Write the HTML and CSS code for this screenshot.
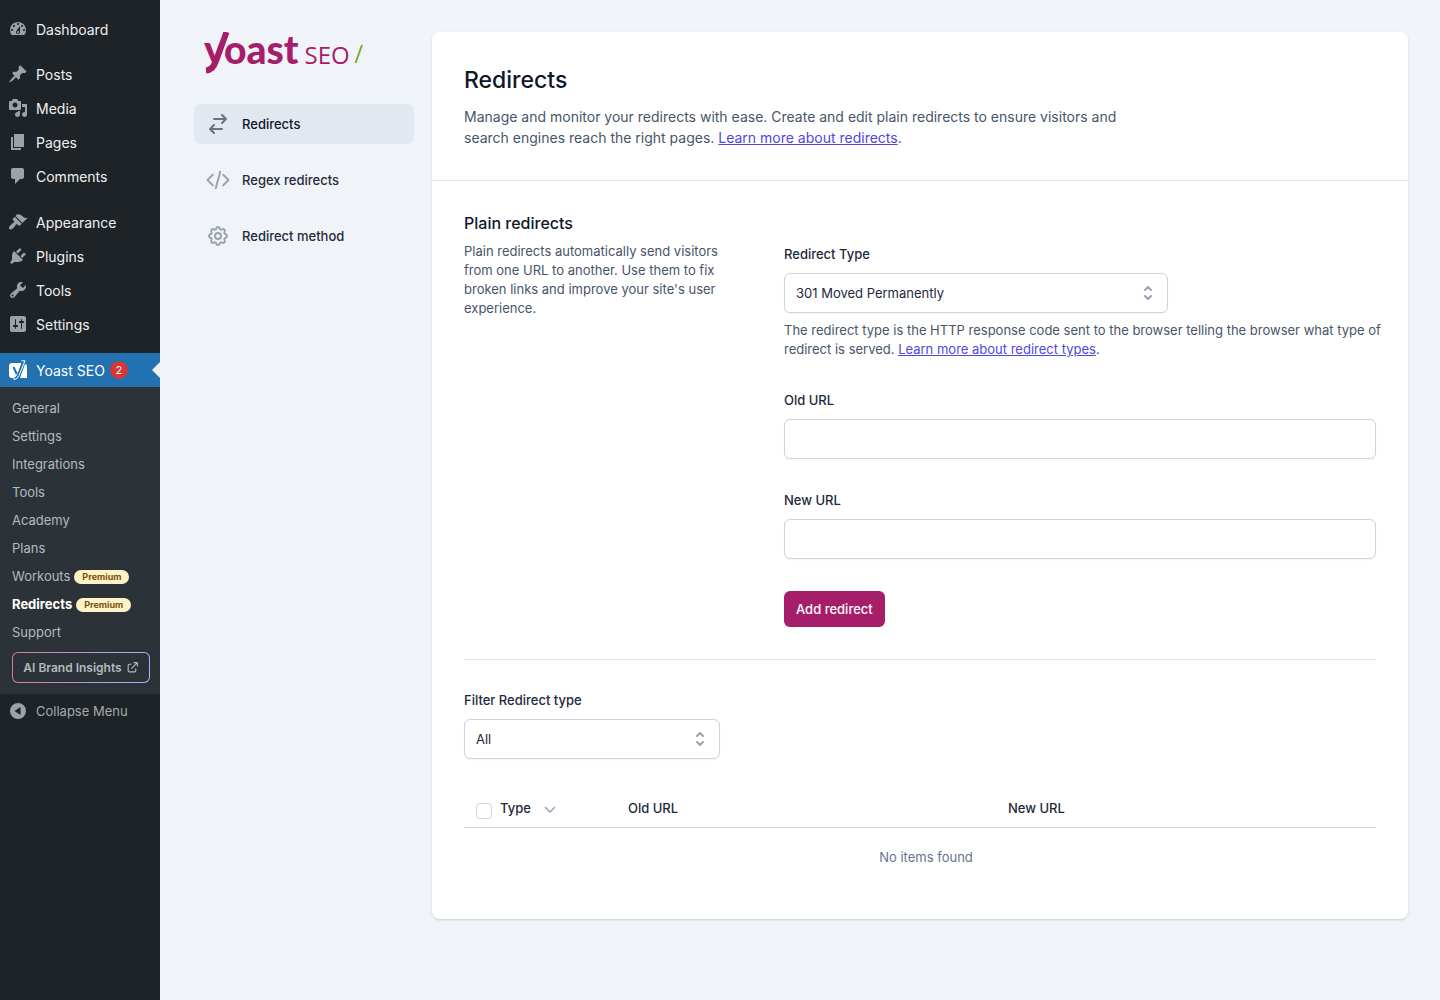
FILE: index.html
```
<!DOCTYPE html>
<html lang="en">
<head>
  <meta charset="UTF-8">
  <meta name="viewport" content="width=device-width, initial-scale=1">
  <title>Redirects - Yoast SEO</title>
  <link rel="stylesheet" href="styles.css">
</head>
<body>
<div class="layout">
  <!-- admin menu -->
  <nav class="admin-menu" aria-label="Main menu">
    <ul class="menu-group">
      <li><a href="#" class="menu-item">
        <svg class="menu-icon" viewBox="0 0 20 20"><path d="M3.76 16h12.48c1.1-1.37 1.76-3.11 1.76-5 0-4.42-3.58-8-8-8s-8 3.58-8 8c0 1.89.66 3.63 1.76 5zM10 4c.55 0 1 .45 1 1s-.45 1-1 1-1-.45-1-1 .45-1 1-1zM6 6c.55 0 1 .45 1 1s-.45 1-1 1-1-.45-1-1 .45-1 1-1zm8 0c.55 0 1 .45 1 1s-.45 1-1 1-1-.45-1-1 .45-1 1-1zm-5.37 5.55L12 7v6c0 1.1-.9 2-2 2s-2-.9-2-2c0-.57.24-1.08.63-1.45zM4 10c.55 0 1 .45 1 1s-.45 1-1 1-1-.45-1-1 .45-1 1-1zm12 0c.55 0 1 .45 1 1s-.45 1-1 1-1-.45-1-1 .45-1 1-1zm-5 3c0-.55-.45-1-1-1s-1 .45-1 1 .45 1 1 1 1-.45 1-1z"/></svg>
        Dashboard</a></li>
    </ul>
    <ul class="menu-group">
      <li><a href="#" class="menu-item">
        <svg class="menu-icon" viewBox="0 0 20 20"><path d="M10.44 3.02l1.82-1.82 6.36 6.35-1.83 1.82c-1.05-.68-2.48-.57-3.41.36l-.75.75c-.92.93-1.04 2.35-.35 3.41l-1.83 1.82-2.41-2.41-2.8 2.79c-.42.42-3.38 2.71-3.8 2.29s1.86-3.39 2.28-3.81l2.79-2.79L4.1 9.36l1.83-1.82c1.05.69 2.48.57 3.4-.36l.75-.75c.93-.92 1.05-2.35.36-3.41z"/></svg>
        Posts</a></li>
      <li><a href="#" class="menu-item">
        <svg class="menu-icon" viewBox="0 0 20 20"><path d="M13 11V4c0-.55-.45-1-1-1h-1.67L9 1H5L3.67 3H2c-.55 0-1 .45-1 1v7c0 .55.45 1 1 1h10c.55 0 1-.45 1-1zM7 4.5c1.38 0 2.5 1.12 2.5 2.5S8.38 9.5 7 9.5 4.5 8.38 4.5 7 5.62 4.5 7 4.5zM14 6h5v10.5c0 1.38-1.12 2.5-2.5 2.5S14 17.88 14 16.5s1.12-2.5 2.5-2.5c.17 0 .34.02.5.05V9h-3V6zm-4 8.05V13h2v3.5c0 1.38-1.12 2.5-2.5 2.5S7 17.88 7 16.5 8.12 14 9.5 14c.17 0 .34.02.5.05z"/></svg>
        Media</a></li>
      <li><a href="#" class="menu-item">
        <svg class="menu-icon" viewBox="0 0 20 20"><path d="M6 15V2h10v13H6zm-1 1h8v2H3V5h2v11z"/></svg>
        Pages</a></li>
      <li><a href="#" class="menu-item">
        <svg class="menu-icon" viewBox="0 0 20 20"><path d="M5 2h9c1.1 0 2 .9 2 2v7c0 1.1-.9 2-2 2h-2l-5 5v-5H5c-1.1 0-2-.9-2-2V4c0-1.1.9-2 2-2z"/></svg>
        Comments</a></li>
    </ul>
    <ul class="menu-group">
      <li><a href="#" class="menu-item">
        <svg class="menu-icon" viewBox="0 0 20 20"><path d="M14.48 11.06L7.41 3.99l1.5-1.5c.5-.56 2.3-.47 3.51.32 1.21.8 1.43 1.28 2.91 2.1 1.18.64 2.45 1.26 4.45.85zm-.71.71L6.7 4.7 4.93 6.47c-.39.39-.39 1.02 0 1.41l1.06 1.06c.39.39.39 1.03 0 1.42-.6.6-1.43 1.11-2.21 1.69-.35.26-.7.53-1.01.84C1.43 14.23.4 16.08 1.4 17.07c.99 1 2.84-.03 4.18-1.36.31-.31.58-.66.85-1.02.57-.78 1.08-1.61 1.69-2.21.39-.39 1.02-.39 1.41 0l1.06 1.06c.39.39 1.02.39 1.41 0z"/></svg>
        Appearance</a></li>
      <li><a href="#" class="menu-item">
        <svg class="menu-icon" viewBox="0 0 20 20"><path d="M13.11 4.36L9.87 7.6 8 5.73l3.24-3.24c.35-.34 1.05-.2 1.56.32.52.51.66 1.21.31 1.55zm-8 1.77l.91-1.12 9.01 9.01-1.19.84c-.71.71-2.63 1.16-3.82 1.16H6.14L4.9 17.26c-.59.59-1.54.59-2.12 0-.59-.58-.59-1.53 0-2.12l1.24-1.24v-3.88c0-1.13.4-3.19 1.09-3.89zm7.26 3.97l3.24-3.24c.34-.35 1.04-.21 1.55.31.52.51.66 1.21.31 1.55l-3.24 3.25z"/></svg>
        Plugins</a></li>
      <li><a href="#" class="menu-item">
        <svg class="menu-icon" viewBox="0 0 20 20"><path d="M16.68 9.77c-1.34 1.34-3.3 1.67-4.95.99l-5.41 6.52c-.99.99-2.59.99-3.58 0s-.99-2.59 0-3.57l6.52-5.42c-.68-1.65-.35-3.61.99-4.95 1.28-1.28 3.12-1.62 4.72-1.06l-2.89 2.89 2.82 2.82 2.86-2.87c.53 1.58.18 3.39-1.08 4.65zM3.81 16.21c.4.39 1.04.39 1.43 0 .4-.4.4-1.04 0-1.43-.39-.4-1.03-.4-1.43 0-.39.39-.39 1.03 0 1.43z"/></svg>
        Tools</a></li>
      <li><a href="#" class="menu-item">
        <svg class="menu-icon" viewBox="0 0 20 20"><path d="M18 16V4c0-1.1-.9-2-2-2H4c-1.1 0-2 .9-2 2v12c0 1.1.9 2 2 2h12c1.1 0 2-.9 2-2zM8 11h1c.55 0 1 .45 1 1s-.45 1-1 1H8v1.5c0 .28-.22.5-.5.5s-.5-.22-.5-.5V13H6c-.55 0-1-.45-1-1s.45-1 1-1h1V5.5c0-.28.22-.5.5-.5s.5.22.5.5V11zm5-2h-1c-.55 0-1-.45-1-1s.45-1 1-1h1V5.5c0-.28.22-.5.5-.5s.5.22.5.5V7h1c.55 0 1 .45 1 1s-.45 1-1 1h-1v5.5c0 .28-.22.5-.5.5s-.5-.22-.5-.5V9z"/></svg>
        Settings</a></li>
    </ul>
    <ul class="menu-group">
      <li><a href="#" class="menu-item current">
        <svg class="menu-icon" viewBox="0 0 20 20">
          <path d="M4 3h9.500l-5 15H4c-2 0-3-1-3-3V6c0-2 1-3 3-3zM17 4c1.200.300 2 1.200 2 2.500V18h-7z"/>
          <path class="icon-mark" d="M5.500 7l3.200 7M15.500 1l-5.500 14q-1 3-4 3.500"/>
          <path class="icon-edge" d="M13.500.800h3.500L11 15.500q-1.500 4-5 4v-1.800"/>
        </svg>
        Yoast SEO <span class="count">2</span></a></li>
    </ul>
    <ul class="submenu">
      <li><a href="#">General</a></li>
      <li><a href="#">Settings</a></li>
      <li><a href="#">Integrations</a></li>
      <li><a href="#">Tools</a></li>
      <li><a href="#">Academy</a></li>
      <li><a href="#">Plans</a></li>
      <li><a href="#">Workouts <span class="premium">Premium</span></a></li>
      <li><a href="#" class="active">Redirects <span class="premium">Premium</span></a></li>
      <li><a href="#">Support</a></li>
      <li class="insights"><a href="#">AI Brand Insights
        <svg viewBox="0 0 24 24"><path d="M10 6H6a2 2 0 00-2 2v10a2 2 0 002 2h10a2 2 0 002-2v-4M14 3h7m0 0v7m0-7L10 14"/></svg></a></li>
    </ul>
    <button type="button" class="collapse">
      <svg class="menu-icon" viewBox="0 0 20 20"><path fill-rule="evenodd" d="M10 2a8 8 0 100 16 8 8 0 000-16zm2.500 4v8L6.500 10z"/></svg>
      Collapse Menu</button>
  </nav>

  <div class="content">
    <!-- plugin navigation -->
    <aside class="side-nav">
      <a href="#" class="logo" aria-label="Yoast SEO">
        <svg class="logo-stroke" viewBox="0 0 40 44"><path d="M24.500 0L14 29Q11 38 4 38.500"/></svg>
        <span class="logo-name">yoast</span>
        <span class="logo-seo">SEO</span>
        <svg class="logo-slash" viewBox="0 0 10 20"><path d="M1.500 19L8 1"/></svg>
      </a>
      <a href="#" class="side-link selected">
        <svg viewBox="0 0 24 24"><path d="M8 7h12m0 0l-4-4m4 4l-4 4m0 6H4m0 0l4 4m-4-4l4-4"/></svg>
        Redirects</a>
      <a href="#" class="side-link">
        <svg viewBox="0 0 24 24"><path d="M17.250 6.750L22.500 12l-5.250 5.250M6.750 17.250L1.500 12l5.250-5.250M14.250 3.750l-4.500 16.500"/></svg>
        Regex redirects</a>
      <a href="#" class="side-link">
        <svg viewBox="0 0 24 24"><path d="M10.325 4.317c.426-1.756 2.924-1.756 3.350 0a1.724 1.724 0 002.573 1.066c1.543-.940 3.310.826 2.370 2.370a1.724 1.724 0 001.065 2.572c1.756.426 1.756 2.924 0 3.350a1.724 1.724 0 00-1.066 2.573c.940 1.543-.826 3.310-2.370 2.370a1.724 1.724 0 00-2.572 1.065c-.426 1.756-2.924 1.756-3.350 0a1.724 1.724 0 00-2.573-1.066c-1.543.940-3.310-.826-2.370-2.370a1.724 1.724 0 00-1.065-2.572c-1.756-.426-1.756-2.924 0-3.350a1.724 1.724 0 001.066-2.573c-.940-1.543.826-3.310 2.370-2.370.996.608 2.296.070 2.572-1.065z"/><path d="M15 12a3 3 0 11-6 0 3 3 0 016 0z"/></svg>
        Redirect method</a>
    </aside>

    <main class="card">
      <header class="card-header">
        <h1>Redirects</h1>
        <p>Manage and monitor your redirects with ease. Create and edit plain redirects to ensure visitors and search engines reach the right pages. <a href="#">Learn more about redirects</a>.</p>
      </header>

      <div class="card-body">
        <form class="redirect-form">
          <div class="intro">
            <h2>Plain redirects</h2>
            <p>Plain redirects automatically send visitors from one URL to another. Use them to fix broken links and improve your site's user experience.</p>
          </div>
          <div class="fields">
            <div class="field">
              <label for="redirect-type">Redirect Type</label>
              <div class="select-wrap type-select">
                <select id="redirect-type">
                  <option>301 Moved Permanently</option>
                  <option>302 Found</option>
                  <option>307 Temporary Redirect</option>
                  <option>410 Content Deleted</option>
                </select>
                <svg viewBox="0 0 20 20"><path d="M7 7l3-3 3 3m0 6l-3 3-3-3"/></svg>
              </div>
              <p class="help">The redirect type is the HTTP response code sent to the browser telling the browser what type of redirect is served. <a href="#">Learn more about redirect types</a>.</p>
            </div>
            <div class="field">
              <label for="old-url">Old URL</label>
              <input type="text" id="old-url">
            </div>
            <div class="field">
              <label for="new-url">New URL</label>
              <input type="text" id="new-url">
            </div>
            <button type="submit" class="add-button">Add redirect</button>
          </div>
        </form>

        <div class="list">
          <div class="field">
            <label for="filter-type">Filter Redirect type</label>
            <div class="select-wrap filter-select">
              <select id="filter-type">
                <option>All</option>
                <option>301 Moved Permanently</option>
              </select>
              <svg viewBox="0 0 20 20"><path d="M7 7l3-3 3 3m0 6l-3 3-3-3"/></svg>
            </div>
          </div>
          <table>
            <thead>
              <tr>
                <th class="col-type"><div class="type-head">
                  <input type="checkbox" aria-label="Select all">
                  <span>Type</span>
                  <svg viewBox="0 0 12 12"><path d="M1 4l5 5 5-5"/></svg>
                </div></th>
                <th>Old URL</th>
                <th>New URL</th>
              </tr>
            </thead>
            <tbody>
              <tr><td colspan="3">No items found</td></tr>
            </tbody>
          </table>
        </div>
      </div>
    </main>
  </div>
</div>
</body>
</html>
```
FILE: styles.css
```
* {
  box-sizing: border-box;
}

body {
  margin: 0;
  font-family: Inter, "Liberation Sans", sans-serif;
  font-size: 13px;
  line-height: 19px;
  color: #1e293b;
  background-color: #f0f4f8;
}

h1, h2, p, ul {
  margin: 0;
  padding: 0;
}

ul {
  list-style: none;
}

button, input, select {
  font: inherit;
  color: inherit;
}

.layout {
  display: flex;
  min-height: 100vh;
}

/* admin menu */
.admin-menu {
  flex: none;
  width: 160px;
  padding-top: 12px;
  background-color: #1d2327;
}

.menu-group {
  margin-bottom: 12px;
}

.menu-group:first-child {
  margin-bottom: 11px;
}

.menu-item, .collapse {
  display: flex;
  align-items: center;
  height: 34px;
  padding: 0 8px;
  gap: 8px;
  font-size: 14px;
  color: #f0f0f1;
  text-decoration: none;
}

.menu-icon {
  flex: none;
  width: 20px;
  height: 20px;
  fill: #9ca2a7;
}

.menu-item.current {
  position: relative;
  background-color: #2271b1;
  color: #fff;
}

.menu-item.current .menu-icon {
  fill: #fff;
}

.menu-item.current::after {
  content: "";
  position: absolute;
  right: 0;
  top: 9px;
  border: 8px solid transparent;
  border-left-width: 0;
  border-right-color: #f0f0f1;
}

.icon-mark {
  fill: none;
  stroke: #2271b1;
  stroke-width: 2;
}

.icon-edge {
  fill: none;
  stroke: #fff;
  stroke-width: 1;
}

.count {
  width: 18px;
  height: 18px;
  margin-left: -3px;
  border-radius: 9px;
  background-color: #d63638;
  font-size: 11px;
  line-height: 18px;
  text-align: center;
}

.submenu {
  margin-top: -12px;
  padding: 7px 10px 11px 12px;
  background-color: #2c3338;
}

.submenu a {
  display: flex;
  align-items: center;
  gap: 4px;
  height: 28px;
  color: #b5babf;
  text-decoration: none;
}

.submenu .active {
  color: #fff;
  font-weight: 700;
}

.premium {
  height: 14px;
  margin-top: 2px;
  padding: 0 8px;
  border-radius: 7px;
  background-color: #fef3c7;
  color: #78500f;
  font-size: 9px;
  font-weight: 700;
  line-height: 14px;
}

.submenu .insights a {
  height: 31px;
  margin-top: 6px;
  justify-content: center;
  border: 1px solid transparent;
  border-radius: 6px;
  background: linear-gradient(#2c3338, #2c3338) padding-box, linear-gradient(90deg, #d57aa8, #a5b4fc) border-box;
  font-size: 12px;
  font-weight: 600;
}

.insights svg {
  width: 13px;
  height: 13px;
  fill: none;
  stroke: #b5babf;
  stroke-width: 2;
}

.collapse {
  border: 0;
  background: none;
  color: #a7aaad;
  font-size: 13px;
}

/* plugin navigation */
.content {
  flex: 1;
  display: flex;
  align-items: flex-start;
  gap: 18px;
  padding: 32px 32px 32px 34px;
}

.side-nav {
  flex: none;
  display: flex;
  flex-direction: column;
  gap: 16px;
  width: 220px;
}

.logo {
  position: relative;
  display: flex;
  align-items: baseline;
  gap: 6px;
  height: 56px;
  padding-left: 10px;
  color: #a61e69;
  line-height: 34px;
  text-decoration: none;
}

.logo-name {
  font-family: Lato, sans-serif;
  font-size: 39px;
  font-weight: 900;
}

.logo-seo {
  font-family: "Open Sans", sans-serif;
  font-size: 24px;
}

.logo-stroke {
  position: absolute;
  left: 8px;
  top: 0;
  width: 40px;
  height: 44px;
  fill: none;
  stroke: #a61e69;
  stroke-width: 6;
}

.logo-slash {
  width: 10px;
  height: 20px;
  margin-left: -2px;
  fill: none;
  stroke: #77b227;
  stroke-width: 2;
}

.side-link {
  display: flex;
  align-items: center;
  gap: 12px;
  height: 40px;
  padding: 0 12px;
  border-radius: 6px;
  color: #1e293b;
  font-weight: 500;
  text-decoration: none;
}

.side-link svg {
  width: 24px;
  height: 24px;
  fill: none;
  stroke: #9ca3af;
  stroke-width: 2;
  stroke-linecap: round;
  stroke-linejoin: round;
}

.side-link.selected {
  background-color: #e2e8f0;
  color: #0f172a;
}

.side-link.selected svg {
  stroke: #6b7280;
}

/* card */
.card {
  flex: 1;
  border-radius: 8px;
  background-color: #fff;
  box-shadow: 0 1px 3px rgba(0, 0, 0, 0.1), 0 1px 2px rgba(0, 0, 0, 0.06);
}

.card p {
  color: #475569;
}

.card p a {
  color: #4f46e5;
}

.card-header {
  padding: 32px;
  border-bottom: 1px solid #e2e8f0;
}

.card-header h1 {
  margin-bottom: 10px;
  color: #0f172a;
  font-size: 23px;
  font-weight: 500;
  line-height: 32px;
}

.card-header p {
  max-width: 660px;
  font-size: 14px;
  line-height: 21px;
}

.card-body {
  padding: 32px;
}

.redirect-form {
  display: grid;
  grid-template-columns: 288px 1fr;
  gap: 32px;
  padding-bottom: 32px;
  border-bottom: 1px solid #e5e7eb;
}

.intro h2 {
  margin-bottom: 9px;
  color: #0f172a;
  font-size: 16px;
  font-weight: 500;
  line-height: 20px;
}

.intro p {
  max-width: 256px;
}

.fields {
  display: flex;
  flex-direction: column;
  align-items: flex-start;
  gap: 32px;
  padding-top: 32px;
}

.field {
  width: 100%;
}

.field label {
  display: block;
  margin-bottom: 9px;
  font-weight: 500;
}

.field input, .field select {
  display: block;
  width: 100%;
  height: 40px;
  padding: 0 11px;
  border: 1px solid #cbd5e1;
  border-radius: 6px;
  background-color: #fff;
  box-shadow: 0 1px 2px rgba(0, 0, 0, 0.05);
  appearance: none;
}

.select-wrap {
  position: relative;
}

.select-wrap svg {
  position: absolute;
  right: 10px;
  top: 10px;
  width: 20px;
  height: 20px;
  fill: none;
  stroke: #9ca3af;
  stroke-width: 2;
  stroke-linecap: round;
  stroke-linejoin: round;
  pointer-events: none;
}

.type-select {
  max-width: 384px;
}

.filter-select {
  max-width: 256px;
}

.help {
  margin-top: 8px;
  margin-right: -12px;
}

.add-button {
  height: 36px;
  padding: 0 12px;
  border: 0;
  border-radius: 6px;
  background-color: #a61e69;
  color: #fff;
  font-weight: 500;
  cursor: pointer;
}

/* redirects list */
.list {
  padding-top: 31px;
}

table {
  width: 100%;
  margin-top: 32px;
  border-collapse: collapse;
  table-layout: fixed;
}

th {
  height: 36px;
  padding: 0 12px;
  border-bottom: 1px solid #cbd5e1;
  font-weight: 500;
  text-align: left;
}

.col-type {
  width: 152px;
}

.type-head {
  display: flex;
  align-items: center;
  gap: 8px;
}

.type-head input {
  width: 16px;
  height: 16px;
  margin: 4px 0 0;
  border: 1px solid #cbd5e1;
  border-radius: 4px;
  background-color: #fff;
  appearance: none;
}

.type-head svg {
  width: 12px;
  height: 12px;
  margin-left: 5px;
  fill: none;
  stroke: #94a3b8;
  stroke-width: 1.500;
}

td {
  padding: 20px 0 20px 12px;
  color: #64748b;
  text-align: center;
}
```
